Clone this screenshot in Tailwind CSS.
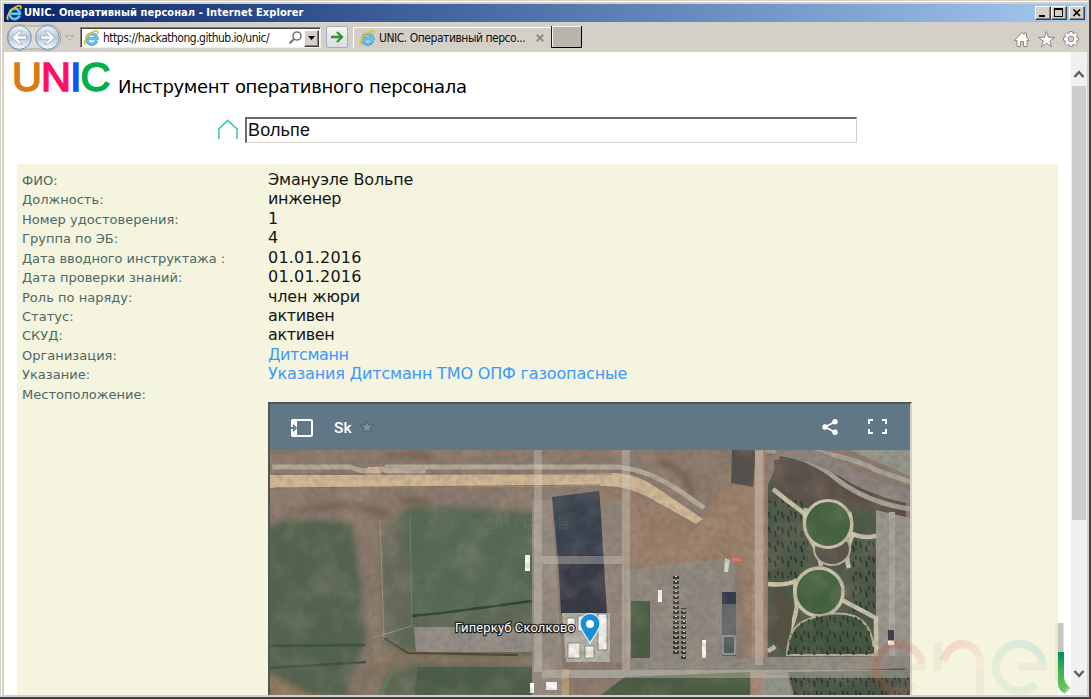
<!DOCTYPE html>
<html lang="ru">
<head>
<meta charset="utf-8">
<title>UNIC. Оперативный персонал</title>
<script src="https://cdn.jsdelivr.net/npm/@tailwindcss/browser@4"></script>
</head>
<body class="w-[1091px] h-[699px] overflow-hidden bg-[#d4d0c8]">
<svg class="hidden">
  <symbol id="ie" viewBox="0 0 16 16">
    <path d="M13.600 10.800A5.200 5.200 0 1 1 13.900 8.700H5" fill="none" stroke="#2b8fce" stroke-width="3.100"/>
    <path d="M13.400 10.700A5.200 5.200 0 1 1 13.800 8.700H5" fill="none" stroke="#6ccaf5" stroke-width="1.900"/>
    <path d="M2.600 14.700C-.4 14.200 2.200 8.300 6.300 4.500 10 1 14.200-.3 14.800 1.800c.2.700 0 1.500-.4 2.400" fill="none" stroke="#f6bf22" stroke-width="1.700"/>
  </symbol>
</svg>
<div class="w-[1091px] h-[699px] flex flex-col p-px border-r-2 border-b-2 border-[#45434a] bg-[#d4d0c8]">
 <div class="flex-1 min-h-0 flex flex-col border-t border-l border-white pt-[2px] pl-[2px] pr-px pb-0">
  <!-- title bar -->
  <div class="h-[18px] shrink-0 flex items-center bg-gradient-to-r from-[#0a246a] to-[#a6caf0] text-white pr-[2px]">
    <svg class="w-4 h-4 ml-[2px]"><use href="#ie"/></svg>
    <span class="ml-[2px] flex-1 whitespace-nowrap font-bold text-[11px] leading-[18px] tracking-[0.070px]" style="font-family:'DejaVu Sans Condensed','DejaVu Sans',sans-serif;font-stretch:condensed">UNIC. Оперативный персонал - Internet Explorer</span>
    <div class="flex">
      <div class="w-4 h-[14px] bg-[#d4d0c8] border border-white border-r-[#404040] border-b-[#404040] shadow-[inset_-1px_-1px_#808080]"><svg class="w-[14px] h-3"><path d="M3 8h6v2H3z"/></svg></div>
      <div class="w-4 h-[14px] bg-[#d4d0c8] border border-white border-r-[#404040] border-b-[#404040] shadow-[inset_-1px_-1px_#808080]"><svg class="w-[14px] h-3" shape-rendering="crispEdges"><path d="M2 1h9v9H2zM3 3v6h7V3z" fill-rule="evenodd"/></svg></div>
      <div class="ml-[2px] w-4 h-[14px] bg-[#d4d0c8] border border-white border-r-[#404040] border-b-[#404040] shadow-[inset_-1px_-1px_#808080]"><svg class="w-[14px] h-3"><path d="M3.500 2.500l6.500 6.500M10 2.500L3.500 9" stroke="#000" stroke-width="1.700"/></svg></div>
    </div>
  </div>
  <!-- toolbar -->
  <div class="h-[30px] shrink-0 flex items-start bg-[#d4d0c8] text-[#111]">
    <svg class="w-[76px] h-[30px] shrink-0" viewBox="4 22 76 30">
      <defs><linearGradient id="b" x1="0" y1="0" x2="0" y2="1"><stop offset="0" stop-color="#f3f7fb"/><stop offset=".5" stop-color="#b4c6d8"/><stop offset="1" stop-color="#f4fbff"/></linearGradient></defs>
      <path d="M20 24.500Q34 28 48 24.500A13 13 0 0 1 48 50.500Q34 47 20 50.500A13 13 0 0 1 20 24.500" fill="#dddbd6" stroke="#aaa79f"/>
      <circle cx="19.500" cy="37.500" r="11.800" fill="url(#b)" stroke="#7c93aa"/>
      <circle cx="47.500" cy="37.500" r="11.800" fill="url(#b)" stroke="#7c93aa"/>
      <path id="ar" d="M12 37.500l7-6.500h3.500l-4.500 4.800h8.500v3.400H18l4.500 4.800H19z" fill="#fff" stroke="#8ea6bd" stroke-width=".8"/>
      <use href="#ar" transform="matrix(-1 0 0 1 67 0)"/>
      <path d="M65.500 36h8l-4 4z" fill="#eceae6" stroke="#9c9a94"/>
    </svg>
    <div class="mt-[5px] w-[241px] h-[21px] bg-white border-t border-l border-t-[#808080] border-l-[#808080] border-r border-b border-r-[#eee] border-b-[#eee] flex items-center shadow-[inset_1px_1px_#404040]">
      <svg class="w-4 h-4 ml-[2px]"><use href="#ie"/></svg>
      <span class="ml-1 w-[185px] whitespace-nowrap text-[12px] tracking-[-0.500px]" style="font-family:'DejaVu Sans Condensed','DejaVu Sans',sans-serif;font-stretch:condensed">https://hackathong.github.io/unic/</span>
      <svg class="w-4 h-4 shrink-0"><circle cx="9" cy="6" r="4" fill="none" stroke="#777" stroke-width="1.600"/><path d="M6 9l-4.500 4.500" stroke="#777" stroke-width="2.200"/></svg>
      <div class="w-[15px] h-[17px] mt-px bg-[#d4d0c8] border border-white border-r-[#404040] border-b-[#404040] flex items-center justify-center shadow-[inset_-1px_-1px_#808080]"><svg class="w-[7px] h-1"><path d="M0 0h7L3.500 4z"/></svg></div>
    </div>
    <div class="mt-1 ml-[5px] w-[22px] h-[22px] rounded-[2px] border border-[#a7aaba] bg-gradient-to-b from-[#f4f4f6] to-[#dcdde2] flex items-center justify-center"><svg class="w-[14px] h-[14px]"><path d="M1 7h10M7 2l5 5-5 5" fill="none" stroke="#2c962a" stroke-width="2.300"/></svg></div>
    <div class="mt-[5px] ml-[5px] w-[198px] h-[21px] border-t border-l border-white flex items-center">
      <svg class="w-4 h-4 ml-[5px]"><use href="#ie"/></svg>
      <span class="ml-1 flex-1 whitespace-nowrap text-[12px] tracking-[-0.470px]" style="font-family:'DejaVu Sans Condensed','DejaVu Sans',sans-serif;font-stretch:condensed">UNIC. Оперативный персо...</span>
      <svg class="w-2 h-2 mr-[7px]"><path d="M.7.700l6.600 6.600M7.300.700L.7 7.300" stroke="#908e88" stroke-width="2"/></svg>
    </div>
    <div class="mt-1 w-[31px] h-[22px] bg-[#b9b5ab] border-l border-r border-b border-l-[#222] border-r-black border-b-black shadow-[inset_1px_1px_#f4f2ee]"></div>
    <svg class="ml-auto mr-[7px] w-[67px] h-[30px]" viewBox="1013 22 67 30" fill="#fff" stroke="#8b8984" stroke-linejoin="round">
      <path d="M1014.500 40.500l7.500-8 2 2v-1.500h2.500v4l2.700 3.500H1027v6h-3.500v-5h-3v5H1017v-6z"/>
      <path d="M1046.500 31.500l2 5.800h6.200l-4.900 3.600 1.800 5.900-5.100-3.600-5.100 3.600 1.800-5.900-4.900-3.600h6.200z"/>
      <g transform="translate(1071 39)"><path d="M-1.500-7.500h3l.6 2.300 2.200-1.300 2.100 2.100-1.200 2.300 2.300.6v3l-2.300.6 1.200 2.200-2.100 2.100-2.200-1.200-.6 2.300h-3l-.6-2.300-2.200 1.200-2.100-2.100 1.200-2.200-2.300-.6v-3l2.300-.6-1.200-2.300 2.100-2.100 2.200 1.300z"/><circle r="2.800" fill="#d4d0c8"/></g>
    </svg>
  </div>
  <!-- page -->
  <div class="relative w-[1083px] h-[643px] shrink-0 flex bg-white overflow-hidden" style="font-family:'DejaVu Sans',sans-serif">
    <div class="w-[1067px] flex flex-col">
      <div class="h-12 shrink-0 flex items-baseline pl-[8px] text-black whitespace-nowrap">
        <h1 class="-translate-y-[2px] text-[41.500px] leading-[54px] tracking-[-1.000px] w-[106px]" style="font-family:'Liberation Sans',Arial,sans-serif;-webkit-text-stroke:1.6px currentColor"><span class="text-[#d97b13]">U</span><span class="text-[#ff0f64]">N</span><span class="text-[#0a55fa]">I</span><span class="text-[#00b050]">C</span></h1>
        <span class="text-[18px] tracking-[-0.310px]">Инструмент оперативного персонала</span>
      </div>
      <div class="mt-[17px] pl-[213px] h-[26px] shrink-0 flex">
        <svg class="w-[22px] h-[26px]" fill="none" stroke="#50c8b8" stroke-width="1.700"><path d="M1.800 22V11.800L10.700 3.500l9.300 8.300V22"/></svg>
        <div class="ml-[6px] w-[612px] h-[26px] border-t-2 border-l-2 border-r border-b border-t-[#6a6a6a] border-l-[#6a6a6a] border-r-[#d4d0c8] border-b-[#d4d0c8] pl-[1px] text-[18px] leading-[22px] text-[#111] tracking-[0.150px]" style="font-family:'Liberation Sans',Arial,sans-serif">Вольпе</div>
      </div>
      <div class="mt-[21px] ml-[13px] w-[1041px] h-[531px] shrink-0 bg-[#f5f4de] pt-[6px] pl-[5px]">
        <div class="grid grid-cols-[246px_1fr] auto-rows-[19.430px] leading-[19.430px] whitespace-nowrap text-[16px] text-[#151515] tracking-[-0.160px] [&>dt]:text-[13px] [&>dt]:text-[#4b6869] [&>dt]:pt-px [&>dt]:tracking-[0.020px]">
          <dt>ФИО:</dt><dd>Эмануэле Вольпе</dd>
          <dt>Должность:</dt><dd class="tracking-[-0.350px]">инженер</dd>
          <dt>Номер удостоверения:</dt><dd>1</dd>
          <dt>Группа по ЭБ:</dt><dd>4</dd>
          <dt class="tracking-[-0.060px]!">Дата вводного инструктажа :</dt><dd class="tracking-[0.200px]">01.01.2016</dd>
          <dt>Дата проверки знаний:</dt><dd class="tracking-[0.200px]">01.01.2016</dd>
          <dt>Роль по наряду:</dt><dd>член жюри</dd>
          <dt>Статус:</dt><dd class="tracking-[-0.350px]">активен</dd>
          <dt>СКУД:</dt><dd class="tracking-[-0.350px]">активен</dd>
          <dt>Организация:</dt><dd class="text-[#3b99fc] tracking-[-0.400px]">Дитсманн</dd>
          <dt>Указание:</dt><dd class="text-[#3b99fc]">Указания Дитсманн ТМО ОПФ газоопасные</dd>
          <dt>Местоположение:</dt>
        </div>
        <div class="-mt-[1.160px] ml-[246px] w-[644px] h-[293px] border-t-2 border-l-2 border-r-2 border-t-[#555550] border-l-[#555550] border-r-[#d4d0c8] flex flex-col">
          <div class="h-[46px] shrink-0 bg-[#607885] flex items-center text-white">
            <svg class="ml-[20px] mt-[2px] w-[23px] h-[18px]"><rect x="2" y="1" width="20" height="16" rx="1" fill="none" stroke="#fff" stroke-width="2"/><path d="M1 1h6v16H1z" fill="#fff"/><path d="M7.500 2v14" stroke="#607885"/><path d="M0 9h4M3 6l3 3-3 3" fill="none" stroke="#607885" stroke-width="1.800"/></svg>
            <span class="ml-[21px] mt-[3px] w-[26px] text-[15.500px] font-medium tracking-normal" style="font-family:Roboto,sans-serif">Sk</span>
            <svg class="w-[14px] h-[14px]" viewBox="0 0 14 14"><path d="M7 .8l1.600 4.300 4.700.2-3.700 2.900 1.300 4.500L7 10.100l-3.900 2.600 1.300-4.500L.7 5.300l4.700-.2z" fill="#8194a0" stroke="#465c69" stroke-width=".8"/></svg>
            <svg class="ml-auto w-4 h-4" fill="#fff" stroke="#fff"><path d="M13 2.800L3 8l10 5.200" fill="none" stroke-width="1.600"/><g stroke="none"><circle cx="3" cy="8" r="2.700"/><circle cx="13" cy="2.800" r="2.700"/><circle cx="13" cy="13.200" r="2.700"/></g></svg>
            <svg class="ml-[30px] mr-[23px] w-[19px] h-[15px]" fill="none" stroke="#fff" stroke-width="2"><path d="M1 5V1h4M14 1h4v4M18 10v4h-4M5 14H1v-4"/></svg>
          </div>
          <svg class="w-[640px] h-[245px] shrink-0" viewBox="270 450 640 245">
            <defs>
              <filter id="n" x="0" y="0" width="100%" height="100%"><feTurbulence type="fractalNoise" baseFrequency=".16" numOctaves="4" seed="5"/><feColorMatrix values="0 0 0 0 .1  0 0 0 0 .1  0 0 0 0 .08  1.300 0 0 0 -.45"/></filter>
              <filter id="n2" x="0" y="0" width="100%" height="100%"><feTurbulence type="fractalNoise" baseFrequency=".035" numOctaves="4" seed="9"/><feColorMatrix values="0 0 0 0 .7  0 0 0 0 .53  0 0 0 0 .42  2 0 0 0 -.85"/></filter>
              <filter id="s"><feGaussianBlur stdDeviation=".6"/></filter>
              <filter id="s3"><feGaussianBlur stdDeviation="3"/></filter>
              <pattern id="tr" width="13" height="15" patternUnits="userSpaceOnUse"><path d="M2 2l1 6M8 6l1 6M11 1v4" stroke="#26362b" stroke-width="1.800"/></pattern>
              <pattern id="car" width="8" height="5" patternUnits="userSpaceOnUse"><path d="M1 1h6v3H1z" fill="#303436"/><path d="M3 1h2v1H3z" fill="#d8dad9"/></pattern>
            </defs>
            <path d="M260 440h660v265H260z" fill="#8b7a6d"/>
            <g filter="url(#s3)">
              <path d="M262 530l28-12 62 5 7 50 9 36 3 50-11 40-98-6z" fill="#536450"/>
              <path d="M380 535l30-30 124 5 1 190H384z" fill="#5c6955"/>
              <path d="M384 525l20-8 8 100-26 20z" fill="#666959"/>
              <path d="M356 520h24l-1 118-14 57h-19l20-55-3-40z" fill="#88776a"/>
              <path d="M262 670l58 30h-58z" fill="#91785f"/>
              <path d="M345 695l40-50 40 10h110v11l-120-2z" fill="#83735e"/>
              <path d="M597 495l28-4 75 36 40-77h22v200l-10 45-12-125-115-5z" fill="#9a7f69"/>
              <path d="M385 457q20-8 50 2M660 460l25 15 8 25M290 512l60-8 40 12M400 500h30" stroke="#705a49" stroke-width="5" fill="none"/>
            </g>
            <g filter="url(#s)">
              <path d="M408 512l124 5v84l-120 16z" fill="#556a52"/>
              <path d="M270 646l95-1M270 668l96-6" stroke="#3b523d" stroke-width="2.500"/>
              <path d="M412 616l30-3 90-12" stroke="#2b4230" stroke-width="2.500" fill="none"/>
              <path d="M380 520l4 120M372 638l40-12" stroke="#a28d7b" fill="none"/>
              <path d="M410 515l2 112" stroke="#6f8372"/>
              <path d="M384 638l24 15 110 2" stroke="#573e32" stroke-width="2" fill="none"/>
              <path d="M414 627h118v25H416z" fill="#928d86"/>
              <path d="M418 667h114v30H414z" fill="#4c5d47"/>
              <path d="M396 665l-17 30" stroke="#5b805b" stroke-width="3"/>
              <path d="M732 450h24l-3 37-22-4z" fill="#54504b"/>
              <!-- sand road -->
              <path d="M272 467h78l12 4 20-2 8 3h35l-40-5H612q30 0 65 22l27 19" fill="none" stroke="#b5aa99" stroke-width="5"/>
              <path d="M270 475h95l3-8h10l4 8 230-2q24 0 45 15l46 31-7 5-46-26q-24-13-48-12l-332 2z" fill="#d0b896"/>
              <path d="M272 474h340M274 488l326-3" stroke="#86705a" fill="none"/>
              <!-- paved centre -->
              <path d="M532 500h20l12 195h-32z" fill="#968b81"/>
              <path d="M552 497l47-6 14 122h-50z" fill="#38434f"/>
              <path d="M558 555h48l7 58-52 1z" fill="#363744"/>
              <path d="M600 500h24v163h-14z" fill="#918578"/>
              <path d="M627 570l68-9 40-2v112H627z" fill="#90887f"/>
              <path d="M631 601h19v57h-19z" fill="#485d42"/>
              <path d="M562 613h48v49h-44z" fill="#b5b4aa"/>
              <path d="M567 618h8v10h-8zM578 616h6v15h-6zM598 614h9v36h-9zM568 643h12v15h-12zM585 646h9v12h-9z" fill="#f8f7f0" stroke="#666c6b" stroke-width=".7"/>
              <path d="M672 575h8v79h-8zM680 608h6v52h-6z" fill="url(#car)"/>
              <path d="M702 640h4v18h-4zM658 590h4v12h-4zM525 555h5v16h-5z" fill="#fcfbf4"/>
              <path d="M722 592h14v64h-14z" fill="#5d6469"/><path d="M722 592h14v12h-14z" fill="#30384a"/><path d="M723 636h12v18h-12z" fill="#4f5f5c" stroke="#c8c8be"/>
              <path d="M724 572l1-14 5 2-2 12z" fill="#d5d2ca"/><path d="M732 558h9v3h-9z" fill="#ed7b5c"/>
              <!-- park -->
              <path d="M768 485l12-29 46 5 79 49v160H768z" fill="#4e5847"/>
              <path d="M774 460l52-1 80 42v18l-47-10-84-9z" fill="#5a5047"/>
              <path d="M876 510l34 8v150h-34z" fill="#9a968e"/>
              <path d="M892 512v150" stroke="#aaa69c" stroke-width="6"/>
              <path d="M768 500h40v78h-40zM852 535h24v78h-24z" fill="url(#tr)"/>
              <path d="M773 489q14 12 27 21l6 5M806 508q-4 18 5 32 8 12 10 26M849 512q4 12 1 20 8 7 26 4M768 584q20 2 29-4M852 536q-8 18-3 32M796 580q-2 10 1 26-3 18-9 28-10 12-20 17M842 600l34 18v40" fill="none" stroke="#cbc3aa" stroke-width="4.500"/>
              <ellipse cx="832" cy="549" rx="18" ry="16" fill="#5a5249" stroke="#bdb59d" stroke-width="2"/>
              <circle cx="828" cy="524" r="23.500" fill="#44633f" stroke="#cbc3aa" stroke-width="3"/>
              <circle cx="819" cy="592" r="24" fill="#40603e" stroke="#cbc3aa" stroke-width="3.500"/>
              <ellipse cx="780" cy="618" rx="12" ry="31" fill="#555142"/>
              <path d="M787 655q1-30 22-36 25-9 45-3 20 8 20 39z" fill="#43543c" stroke="#b9b199" stroke-width="2"/><path d="M787 655q1-30 22-36 25-9 45-3 20 8 20 39z" fill="url(#tr)"/>
              <!-- roads -->
              <path d="M850 450l60 26v-26z" fill="#94968a"/>
              <path d="M765 450q45 5 74 31 30 22 71 28M806 450q50 8 70 20l40 14" fill="none" stroke="#a8a196" stroke-width="5"/>
              <path d="M776 448q45 7 75 27 25 15 65 23" fill="none" stroke="#8d837f" stroke-width="14"/>
              <path d="M755 450h10l1 245h-15z" fill="#a78a77"/>
              <path d="M532 672l90-3 148-12 140-1v12l-140 5-148 5h-90z" fill="#8f8a81"/>
              <path d="M625 677l125-5v25H598z" fill="#4a5c43"/>
              <path d="M788 672l122-2v25H794z" fill="#4a5346"/><path d="M788 672h122v23H794z" fill="url(#tr)"/>
              <path d="M763 675h24l5 20h-29z" fill="#90958a"/>
              <path d="M562 669h7v26h-7z" fill="#b39a75"/><path d="M546 682h11v8h-11zM530 683h4v10h-4zM888 641h6v4h-6z" fill="#fff"/><path d="M888 630h6v10h-6z" fill="#3a3c48"/>
            </g>
            <path d="M270 450h640v245H270z" filter="url(#n2)" opacity=".2"/>
            <path d="M270 450h640v245H270z" filter="url(#n)" opacity=".36"/>
            <g stroke="#d5cfc5" stroke-opacity=".36" stroke-width="8" fill="none"><path d="M538 450v222M626 450v221M542 560h80M759 450v215M542 674h368"/></g>
            <text x="487" y="529" font-size="14" fill="#8b918e" fill-opacity=".22" font-family="Roboto" textLength="82">2017 Google</text>
            <text x="455" y="632" font-size="13" fill="#fff" stroke="#222" stroke-width="2.500" paint-order="stroke" stroke-linejoin="round" font-family="Roboto, sans-serif" textLength="120">Гиперкуб Сколково</text>
            <path d="M590 643l-7.500-12Q580 628 580 623.500a10 10 0 0 1 20 0q0 4.500-2.500 7.500z" fill="#188fd5" stroke="#e8f1f5" stroke-width="1.200"/><circle cx="590" cy="624" r="4" fill="#fff"/>
          </svg>
        </div>
      </div>
    </div>
    <!-- scroll bar -->
    <div class="w-4 h-[643px] bg-[#f0f0f0] flex flex-col items-center">
      <svg class="w-4 h-[34px] shrink-0"><path d="M3.500 25L8 20l4.500 5" fill="none" stroke="#606060" stroke-width="2.500"/></svg>
      <div class="w-[14px] h-[434px] bg-[#cdcdcd]"></div>
      <svg class="mt-auto w-4 h-[30px] shrink-0"><path d="M3.500 6L8 11l4.500-5" fill="none" stroke="#606060" stroke-width="2.500"/></svg>
    </div>
    <!-- watermark logo -->
    <svg class="absolute left-[864px] top-[568px] w-[203px] h-[75px]" viewBox="868 620 203 75" fill="none" stroke-width="8">
      <defs>
        <linearGradient id="l" x1="0" y1="0" x2="0" y2="1"><stop offset="0" stop-color="#008c5a"/><stop offset=".5" stop-color="#43b556"/><stop offset="1" stop-color="#6fcb5c"/></linearGradient>
        <linearGradient id="e1" x1="0" y1="0" x2="1" y2="1"><stop offset="0" stop-color="#d93b1e" stop-opacity=".2"/><stop offset=".55" stop-color="#e2502c" stop-opacity=".15"/><stop offset="1" stop-color="#e89060" stop-opacity=".05"/></linearGradient>
        <linearGradient id="n1" x1="0" y1="0" x2="1" y2="1"><stop offset="0" stop-color="#f2503c" stop-opacity=".2"/><stop offset="1" stop-color="#f2503c" stop-opacity=".04"/></linearGradient>
        <linearGradient id="e2" x1="1" y1="0" x2="0" y2="1"><stop offset="0" stop-color="#4aa0d8" stop-opacity=".17"/><stop offset="1" stop-color="#5cc88a" stop-opacity=".1"/></linearGradient>
        <linearGradient id="fade" x1="0" y1="0" x2="1" y2="1"><stop offset=".4" stop-color="#fff" stop-opacity="0"/><stop offset="1" stop-color="#fff"/></linearGradient>
      </defs>
      <path d="M922 663.500A23.500 23.500 0 1 0 916 684" stroke="url(#e1)"/>
      <path d="M943 661Q951 644 962 644a19 19 0 0 1 18 22" stroke="url(#n1)"/>
      <path d="M1042.500 663A23.500 23.500 0 1 0 1036 684" stroke="url(#e2)"/>
      <path d="M899 667h27M938 642v29M980 666v28M1018 667h29" stroke="#9c8c7c" stroke-opacity=".08"/>
      <path d="M1055 623h3v29h-3zM1055 652h3v32l-3-6z" fill="#b0c0a0" fill-opacity=".22"/>
      <path d="M1058 623h5v29h-5z" fill="#c4c4c4"/><path d="M1063 623h1v29h-1z" fill="#e2e2e2"/>
      <path d="M1058 652h6v24q0 8 7 12l-6 6q-7-4-7-10z" fill="url(#l)"/>
      <path d="M1062 682h9v13h-9z" fill="url(#fade)"/>
    </svg>
  </div>
 </div>
</div>
</body>
</html>
